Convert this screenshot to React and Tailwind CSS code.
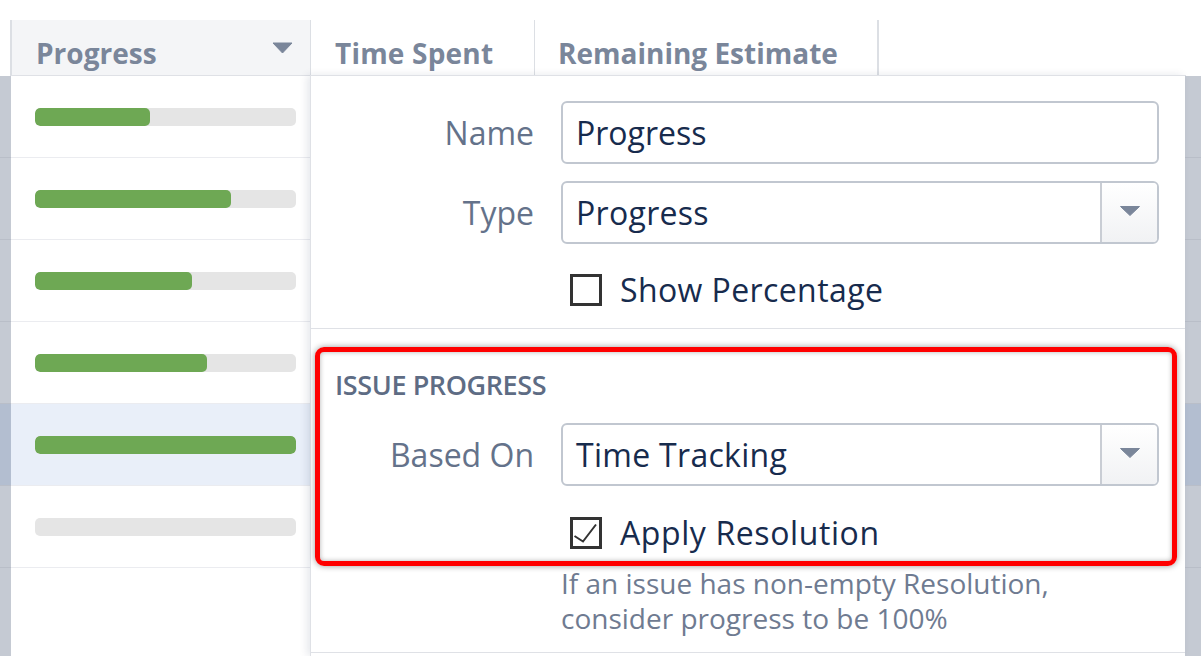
import React from 'react'

const rows = [
    { pct: 44.1 },
    { pct: 75.1 },
    { pct: 60.2 },
    { pct: 65.9 },
    { pct: 100, active: true },
    { pct: 0 },
]

const Caret = ({ className }) => (
    <svg className={className} width="20" height="10" viewBox="0 0 20 10">
        <path d="M0.5 0.5 L19.5 0.5 L10 9.5 Z" fill="#7a869a" stroke="#7a869a" strokeLinejoin="round" />
    </svg>
)

const Gutter = ({ side }) => (
    <div className={`flex flex-col bg-[#c5cad3] ${side === 'left' ? 'w-[11px]' : 'w-[16px]'}`}>
        {rows.map((r, i) => (
            <div
                key={i + side}
                className={`h-[82px] border-b border-[#b9bec8] ${r.active ? 'bg-[#b3bed0]' : ''}`}
            />
        ))}
    </div>
)

const Checkbox = ({ checked }) => (
    <div className="w-[32px] h-[32px] border-[3px] border-[#333333] bg-white flex-none">
        {checked && (
            <svg width="26" height="26" viewBox="0 0 26 26">
                <path d="M1.5 16 L10 21.5 L23 4.5" fill="none" stroke="#333333" strokeWidth="2" strokeLinejoin="miter" />
            </svg>
        )}
    </div>
)

const Select = ({ value }) => (
    <div className="flex w-[598px] h-[63px] border-2 border-[#c1c7d0] rounded-[6px] bg-white overflow-hidden">
        <div className="flex-1 flex items-center pl-[13px] text-[32px] text-[#172b4d] tracking-[0.3px]">{value}</div>
        <div className="w-[57px] flex items-center justify-center border-l-2 border-[#c9cdd4] bg-gradient-to-b from-white to-[#f1f2f4]">
            <Caret className="-mt-[4px]" />
        </div>
    </div>
)

const App = () => {
    return (
        <div className="relative w-[1201px] h-[656px] overflow-hidden bg-white font-['Open_Sans',sans-serif]">
            <div className="h-[20px]" />

            {/* Column headers */}
            <div className="flex h-[56px]">
                <div className="w-[10px]" />
                <div className="flex border-b border-[#dfe1e6]">
                    <div className="w-[301px] flex items-center justify-between pl-[24px] pr-[17px] pt-[10px] bg-[#f4f5f7] border-l-2 border-r border-[#dcdfe4]">
                        <span className="text-[28px] font-bold text-[#7a869a]">Progress</span>
                        <svg width="21" height="12" viewBox="0 0 21 12" className="-mt-[10px]">
                            <path d="M1 1 L20 1 L10.5 11 Z" fill="#7a869a" stroke="#7a869a" strokeLinejoin="round" />
                        </svg>
                    </div>
                    <div className="w-[224px] flex items-center pl-[24px] pt-[10px] border-r border-[#dcdfe4]">
                        <span className="text-[28px] font-bold text-[#7a869a] whitespace-nowrap tracking-[0.2px]">Time Spent</span>
                    </div>
                    <div className="w-[344px] flex items-center pl-[23px] pt-[10px] border-r-2 border-[#dcdfe4]">
                        <span className="text-[28px] font-bold text-[#7a869a] whitespace-nowrap">Remaining Estimate</span>
                    </div>
                    <div className="w-[307px]" />
                </div>
            </div>

            {/* Table body */}
            <div className="flex h-[580px]">
                <Gutter side="left" />
                <div className="w-[299px] flex flex-col">
                    {rows.map((r, i) => (
                        <div
                            key={i + 'row'}
                            className={`h-[82px] flex items-center pl-[24px] border-b border-[#ebecf0] ${r.active ? 'bg-[#e9eff9]' : ''}`}
                        >
                            <div className="w-[261px] h-[18px] rounded-[5px] bg-[#e5e5e5] overflow-hidden">
                                <div className="h-full rounded-[5px] bg-[#6ea854]" style={{ width: `${r.pct}%` }} />
                            </div>
                        </div>
                    ))}
                </div>
                <div className="flex-1 flex flex-col">
                    {rows.map((r, i) => (
                        <div key={i + 'mid'} className={`h-[82px] border-b border-[#ebecf0] ${r.active ? 'bg-[#e9eff9]' : ''}`} />
                    ))}
                </div>
                <Gutter side="right" />
            </div>

            {/* Column settings popover */}
            <div className="absolute left-[310px] top-[75px] w-[875px] bottom-0 bg-white border-l border-t border-[#dfe1e6] shadow-[-3px_0_8px_rgba(9,30,66,0.10)] flex flex-col">
                <div className="flex flex-col gap-[17px] pt-[25px] pr-[26px]">
                    <div className="flex items-center gap-[27px]">
                        <label className="w-[223px] text-right text-[32px] text-[#64728a]">Name</label>
                        <div className="w-[598px] h-[63px] border-2 border-[#c1c7d0] rounded-[6px] flex items-center pl-[13px] text-[32px] text-[#172b4d]">
                            Progress
                        </div>
                    </div>
                    <div className="flex items-center gap-[27px]">
                        <label className="w-[223px] text-right text-[32px] text-[#64728a]">Type</label>
                        <Select value="Progress" />
                    </div>
                </div>
                <div className="flex items-center gap-[18px] ml-[259px] mt-[30px] h-[32px]">
                    <Checkbox />
                    <span className="text-[32px] text-[#172b4d] whitespace-nowrap tracking-[0.4px]">Show Percentage</span>
                </div>

                <div className="mt-[22px] border-t border-[#dfe1e6]" />

                {/* Issue progress section */}
                <div className="mt-[18px] ml-[4px] mr-[8px] border-[5px] border-[#ff0000] rounded-[9px] shadow-[0_0_6px_rgba(0,0,0,0.4),inset_0_0_5px_rgba(0,0,0,0.3)] pt-[15px] pb-[12px]">
                    <div className="pl-[15px] h-[36px] flex items-center text-[27px] font-semibold text-[#5e6c84] tracking-[-0.4px]">
                        ISSUE PROGRESS
                    </div>
                    <div className="flex items-center gap-[27px] mt-[20px]">
                        <label className="w-[214px] text-right text-[32px] text-[#64728a]">Based On</label>
                        <Select value="Time Tracking" />
                    </div>
                    <div className="flex items-center gap-[18px] ml-[250px] mt-[31px] h-[32px]">
                        <Checkbox checked />
                        <span className="text-[32px] text-[#172b4d] whitespace-nowrap tracking-[0.6px]">Apply Resolution</span>
                    </div>
                </div>

                <p className="ml-[250px] text-[28px] leading-[35px] text-[#6f7b91]">
                    If an issue has non-empty Resolution,
                    <br />
                    consider progress to be 100%
                </p>
                <div className="mt-[16px] border-t border-[#dfe1e6]" />
            </div>
        </div>
    )
}

export default App
